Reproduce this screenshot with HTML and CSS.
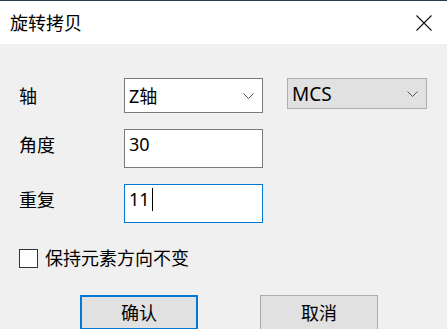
FILE: index.html
```html
<!DOCTYPE html>
<html lang="zh-CN">
<head>
    <meta charset="UTF-8">
    <meta name="viewport" content="width=device-width, initial-scale=1.0">
    <title>旋转拷贝</title>
    <link rel="stylesheet" href="styles.css">
</head>
<body>
    <div class="dialog">
        <div class="titlebar">
            <span class="title">旋转拷贝</span>
            <svg class="close" width="16" height="16" viewBox="0 0 16 16">
                <path d="M0.5 0.5 L15.5 15.5 M15.5 0.5 L0.5 15.5" stroke="#111" stroke-width="1.1" fill="none"/>
            </svg>
        </div>

        <div class="content">
            <div class="row">
                <span class="label label-axis">轴</span>
                <div class="combo">
                    <span>Z轴</span>
                    <svg class="chevron" width="11" height="6" viewBox="0 0 11 6">
                        <path d="M0.5 0.5 L5.5 5.5 L10.5 0.5" stroke="#555" stroke-width="1" fill="none"/>
                    </svg>
                </div>
                <div class="combo combo-flat">
                    <span class="latin">MCS</span>
                    <svg class="chevron" width="11" height="6" viewBox="0 0 11 6">
                        <path d="M0.5 0.5 L5.5 5.5 L10.5 0.5" stroke="#555" stroke-width="1" fill="none"/>
                    </svg>
                </div>
            </div>

            <div class="row row-angle">
                <span class="label">角度</span>
                <div class="field">30</div>
            </div>

            <div class="row row-repeat">
                <span class="label">重复</span>
                <div class="field field-focus">11<span class="caret"></span></div>
            </div>

            <label class="check">
                <span class="check-box"></span>
                <span>保持元素方向不变</span>
            </label>

            <div class="buttons">
                <button class="btn btn-default">确认</button>
                <button class="btn">取消</button>
            </div>
        </div>
    </div>
</body>
</html>
```

FILE: styles.css
```css
* {
    margin: 0;
    padding: 0;
    box-sizing: border-box;
    font-family: "Noto Sans", "Noto Sans CJK SC", sans-serif;
}

body {
    background: #f0f0f0;
    color: #000;
    font-size: 18px;
    overflow: hidden;
}

.titlebar {
    height: 44px;
    background: #fff;
    border-top: 1px solid #2b3a55;
    display: flex;
    align-items: center;
    justify-content: space-between;
    padding: 0 15px 0 10px;
}

.title {
    font-size: 18px;
    line-height: 22px;
}

.close {
    display: block;
}

.content {
    padding: 34px 0 0 19px;
}

.row {
    display: flex;
    align-items: flex-start;
}

.row-angle {
    margin-top: 15px;
}

.row-repeat {
    margin-top: 16px;
}

.label {
    width: 105px;
    line-height: 32px;
}

.label-axis {
    line-height: 36px;
}

.combo {
    width: 139px;
    height: 35px;
    background: #fff;
    border: 1px solid #7a7a7a;
    display: flex;
    align-items: center;
    justify-content: space-between;
    padding: 0 8px 0 4px;
    line-height: 22px;
}

.combo-flat {
    width: 140px;
    height: 31px;
    margin-left: 24px;
    background: #e1e1e1;
    border-color: #adadad;
}

.latin {
    font-size: 19px;
}

.chevron {
    display: block;
}

.field {
    width: 139px;
    height: 39px;
    background: #fff;
    border: 1px solid #7a7a7a;
    padding: 3px 4px 0;
    line-height: 22px;
    display: flex;
    align-items: flex-start;
}

.field-focus {
    border-color: #0078d7;
}

.caret {
    display: inline-block;
    width: 1px;
    height: 23px;
    background: #000;
    margin-left: 2px;
}

.check {
    display: flex;
    align-items: center;
    gap: 7px;
    height: 22px;
    margin-top: 24px;
    line-height: 22px;
}

.check-box {
    width: 19px;
    height: 19px;
    border: 1px solid #333;
    background: #fff;
}

.buttons {
    display: flex;
    gap: 62px;
    margin: 26px 0 0 61px;
}

.btn {
    width: 118px;
    height: 35px;
    background: #e1e1e1;
    border: 1px solid #adadad;
    font-size: 18px;
    line-height: 22px;
    color: #000;
}

.btn-default {
    border: 2px solid #0078d7;
}
```
